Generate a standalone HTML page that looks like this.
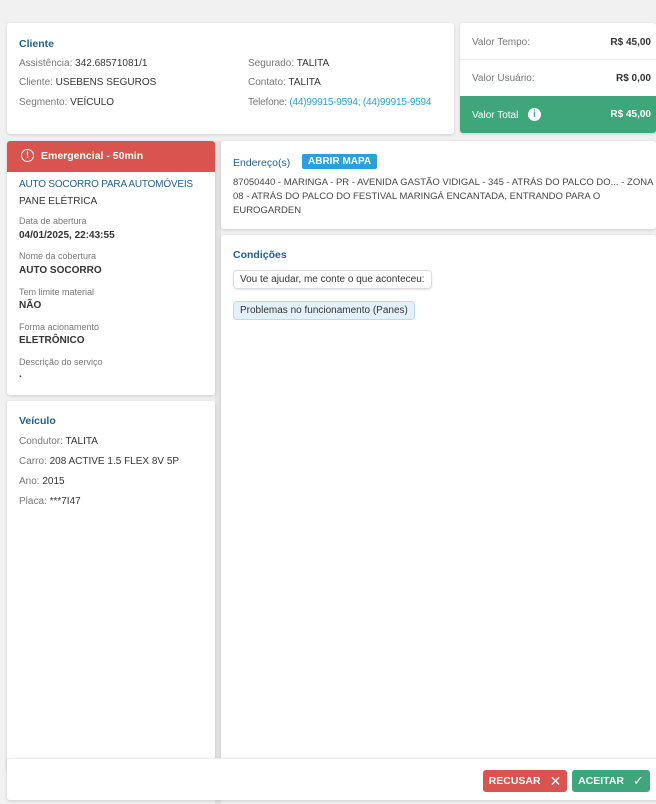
<!DOCTYPE html>
<html><head><meta charset="utf-8"><style>
*{box-sizing:border-box;margin:0;padding:0}
body{width:656px;height:804px;background:#f1f1f1;font-family:"Liberation Sans",sans-serif;font-size:10px;color:#333;position:relative;overflow:hidden}
.card{position:absolute;background:#fff;border-radius:3px;box-shadow:0 1px 3px rgba(0,0,0,.15)}
.t{color:#1f5f8b;font-weight:bold;font-size:10.5px;position:absolute}
.l{color:#777}
.a{position:absolute;white-space:nowrap}
.sm{font-size:9px;color:#777}
.b{font-weight:bold;color:#333}
.btn{position:absolute;top:11px;height:22px;color:#fff;font-weight:bold;border-radius:3px;display:flex;align-items:center;justify-content:center;gap:9px;font-size:10.5px}
</style></head><body>
<div style="position:absolute;left:215px;top:141px;width:6px;height:663px;background:#e4e4e4"></div>
<div class="card" style="left:7px;top:23px;width:447px;height:111px">
 <div class="t" style="left:12px;top:15px">Cliente</div>
 <div class="a" style="left:12px;top:35px"><span class="l">Assistência:</span> 342.68571081/1</div>
 <div class="a" style="left:12px;top:54px"><span class="l">Cliente:</span> USEBENS SEGUROS</div>
 <div class="a" style="left:12px;top:74px"><span class="l">Segmento:</span> VEÍCULO</div>
 <div class="a" style="left:241px;top:35px"><span class="l">Segurado:</span> TALITA</div>
 <div class="a" style="left:241px;top:54px"><span class="l">Contato:</span> TALITA</div>
 <div class="a" style="left:241px;top:74px;letter-spacing:-0.2px"><span class="l">Telefone:</span> <span style="color:#2a9fd8">(44)99915-9594; (44)99915-9594</span></div>
</div>
<div class="card" style="left:460px;top:23px;width:196px;height:110px;overflow:hidden">
 <div class="a l" style="left:12px;top:14px">Valor Tempo:</div><div class="a b" style="right:5px;top:14px">R$ 45,00</div>
 <div style="position:absolute;left:0;right:0;top:36px;border-top:1px solid #eee"></div>
 <div class="a l" style="left:12px;top:50px">Valor Usuário:</div><div class="a b" style="right:5px;top:50px">R$ 0,00</div>
 <div style="position:absolute;left:0;right:0;top:73px;height:37px;background:#3fa67b;color:#fff">
  <div class="a" style="left:12px;top:14px">Valor Total</div>
  <div class="a" style="left:68px;top:12px;width:13px;height:13px;border-radius:50%;background:#fff;color:#3fa67b;font-weight:bold;font-size:10px;text-align:center;line-height:13px">i</div>
  <div class="a" style="right:5px;top:13px;font-weight:bold">R$ 45,00</div>
 </div>
</div>
<div class="card" style="left:7px;top:141px;width:208px;height:254px;overflow:hidden">
 <div style="height:31px;background:#d9534f;color:#fff;font-weight:bold;font-size:10.5px;position:relative">
  <div class="a" style="left:14px;top:8px;width:13px;height:13px;border:1.3px solid #fff;border-radius:50%;font-size:9px;text-align:center;line-height:11px">!</div>
  <div class="a" style="left:34px;top:9px">Emergencial - 50min</div></div>
 <div class="a" style="left:12px;top:38px;color:#1f5f8b;font-size:10px;letter-spacing:-0.2px">AUTO SOCORRO PARA AUTOMÓVEIS</div>
 <div class="a" style="left:12px;top:55px">PANE ELÉTRICA</div>
 <div class="a sm" style="left:12px;top:75px">Data de abertura</div><div class="a b" style="left:12px;top:89px">04/01/2025, 22:43:55</div>
 <div class="a sm" style="left:12px;top:110px">Nome da cobertura</div><div class="a b" style="left:12px;top:124px">AUTO SOCORRO</div>
 <div class="a sm" style="left:12px;top:146px">Tem limite material</div><div class="a b" style="left:12px;top:159px">NÃO</div>
 <div class="a sm" style="left:12px;top:181px">Forma acionamento</div><div class="a b" style="left:12px;top:194px">ELETRÔNICO</div>
 <div class="a sm" style="left:12px;top:216px">Descrição do serviço</div><div class="a b" style="left:12px;top:228px">.</div>
</div>
<div class="card" style="left:7px;top:401px;width:208px;height:370px">
 <div class="t" style="left:12px;top:14px">Veículo</div>
 <div class="a" style="left:12px;top:35px"><span class="l">Condutor:</span> TALITA</div>
 <div class="a" style="left:12px;top:55px"><span class="l">Carro:</span> 208 ACTIVE 1.5 FLEX 8V 5P</div>
 <div class="a" style="left:12px;top:75px"><span class="l">Ano:</span> 2015</div>
 <div class="a" style="left:12px;top:95px"><span class="l">Placa:</span> ***7I47</div>
</div>
<div class="card" style="left:221px;top:141px;width:435px;height:88px">
 <div class="t" style="left:12px;top:16px;font-weight:normal">Endereço(s)</div>
 <div class="a" style="left:81px;top:13px;background:#2a9fd8;color:#fff;font-weight:bold;font-size:10px;padding:2px 6px;border-radius:2px">ABRIR MAPA</div>
 <div style="position:absolute;left:12px;top:35px;line-height:14px;font-size:9.5px;color:#444;white-space:nowrap">87050440 - MARINGA - PR - AVENIDA GASTÃO VIDIGAL - 345 - ATRÁS DO PALCO DO... - ZONA<br>08 - ATRÁS DO PALCO DO FESTIVAL MARINGÁ ENCANTADA, ENTRANDO PARA O<br>EUROGARDEN</div>
</div>
<div class="card" style="left:221px;top:235px;width:435px;height:540px">
 <div class="t" style="left:12px;top:14px">Condições</div>
 <div class="a" style="left:12px;top:35px;border:1px solid #ddd;border-radius:4px;padding:3px 6px;box-shadow:0 1px 2px rgba(0,0,0,.1)">Vou te ajudar, me conte o que aconteceu:</div>
 <div class="a" style="left:12px;top:66px;border:1px solid #b6dcef;background:#e3f2fa;border-radius:4px;padding:3px 6px">Problemas no funcionamento (Panes)</div>
</div>
<div class="card" style="left:7px;top:758px;width:660px;height:42px;border-top:1px solid #eee">
 <div class="btn" style="left:476px;width:84px;background:#d9534f">RECUSAR <span style="font-weight:normal;font-size:14px">✕</span></div>
 <div class="btn" style="left:565px;width:78px;background:#3fa67b">ACEITAR <span style="font-weight:normal;font-size:13px">✓</span></div>
</div>
</body></html>
